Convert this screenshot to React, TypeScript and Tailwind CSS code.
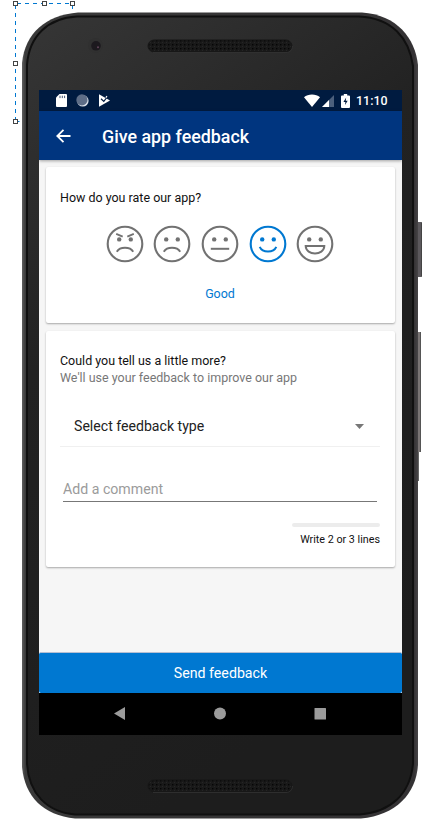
import type { ReactNode } from 'react';

type Mood = 'angry' | 'sad' | 'neutral' | 'good' | 'great';

function Face({ mood }: { mood: Mood }) {
  const selected = mood === 'good';
  return (
    <button aria-label={mood} className={selected ? 'text-[#0078d1]' : 'text-[#727272]'}>
      <svg className="block" width="38" height="38" viewBox="0 0 38 38" fill="none" stroke="currentColor" strokeWidth="2">
        <circle cx="19" cy="19" r="17.3" strokeWidth="2.1" />
        <circle cx="13.2" cy="14.4" r="2.2" fill="currentColor" stroke="none" />
        <circle cx="24.8" cy="14.4" r="2.2" fill="currentColor" stroke="none" />
        {mood === 'angry' && <path d="M10.2 8.8l6.5 2.8M27.8 8.8l-6.5 2.8" strokeWidth="1.8" />}
        {(mood === 'angry' || mood === 'sad') && <path d="M10.8 26.7C14 21.4 24 21.4 27.2 26.7" />}
        {mood === 'neutral' && <path d="M9.8 23.8h18.4" />}
        {mood === 'good' && <path d="M10.7 21.8C13.5 28.1 24.5 28.1 27.3 21.8" />}
        {mood === 'great' && <path d="M9.7 21H28.3C28 31 10 31 9.7 21Z" />}
      </svg>
    </button>
  );
}

function Speaker({ id }: { id: string }) {
  return (
    <svg className="block" width="146" height="14" viewBox="0 0 146 14">
      <defs>
        <pattern id={id} width="4" height="4" patternUnits="userSpaceOnUse">
          <rect width="4" height="4" fill="#191919" />
          <rect x="1" y="1" width="1.4" height="1.4" fill="#050505" />
          <rect x="3" y="3" width="1" height="1" fill="#252525" />
        </pattern>
      </defs>
      <rect x="1" y="1" width="144" height="12" rx="6" fill={`url(#${id})`} stroke="#171717" />
      <path d="M6 13.5H139C143 13.5 145.5 10.5 145.5 7" fill="none" stroke="#383838" strokeWidth=".7" />
    </svg>
  );
}

function Card({ className, children }: { className: string; children: ReactNode }) {
  return <section className={`rounded-[2px] bg-white pr-[15px] pl-[14px] shadow-[0_1px_2px_rgba(0,0,0,0.32)] ${className}`}>{children}</section>;
}

function StatusBar() {
  return (
    <div className="flex h-[21px] items-center bg-[#001b40] pr-[14.5px] pl-[17px] text-white">
      <svg width="11" height="13" viewBox="0 0 11 13">
        <path d="M3.5 0H10Q11 0 11 1V12Q11 13 10 13H1Q0 13 0 12V3.5Z" fill="currentColor" />
        <path d="M4 1.7v2.4M6.3 1.7v2.4M8.6 1.7v2.4" stroke="#425574" strokeWidth="1" />
      </svg>
      <svg className="ml-[9px]" width="13" height="13" viewBox="0 0 13 13">
        <circle cx="6.8" cy="6.8" r="5.8" fill="#dce1e8" />
        <circle cx="5.9" cy="5.9" r="5.6" fill="#5e6d86" />
      </svg>
      <svg className="ml-[10px]" width="12" height="13" viewBox="0 0 12 13">
        <path d="M0 .2L11 6.5L0 12.8Z" fill="currentColor" />
        <path d="M2 4.8L4.8 7.4L8.2 3" fill="none" stroke="#001b40" strokeWidth="1.2" />
        <path d="M6.8 3.6L8 2.2" stroke="#fff" strokeWidth="1.2" />
      </svg>
      <div className="ml-auto flex items-center">
        <svg width="16" height="13" viewBox="0 0 16 13">
          <path d="M0 3.3C4 -.4 12 -.4 16 3.3L8 13Z" fill="currentColor" />
        </svg>
        <svg className="ml-[2px]" width="13" height="13" viewBox="0 0 13 13">
          <path d="M12 1V13H0Z" fill="#4c607c" />
          <path d="M7 6V13H0Z" fill="currentColor" />
        </svg>
        <svg className="ml-[6px]" width="9" height="14" viewBox="0 0 9 14">
          <path d="M2.8 0H6.2V1.5H8Q9 1.5 9 2.5V13Q9 14 8 14H1Q0 14 0 13V2.5Q0 1.5 1 1.5H2.8Z" fill="currentColor" />
          <path d="M5.2 3.5L2.4 8h2L4 11L6.7 6.8H4.7Z" fill="#001b40" />
        </svg>
        <span className="ml-[6px] text-[12.4px] leading-[21px] font-medium">11:10</span>
      </div>
    </div>
  );
}

function Screen() {
  const moods: Mood[] = ['angry', 'sad', 'neutral', 'good', 'great'];
  return (
    <main className="flex h-[645px] flex-col overflow-hidden bg-[#f6f6f6]">
      <StatusBar />
      <header className="z-10 flex h-[49px] shrink-0 items-center bg-[#00357f] pl-[17px] text-white shadow-[0_1px_3px_rgba(0,0,0,0.35)]">
        <svg width="15" height="14" viewBox="0 0 15 14" fill="none" stroke="currentColor" strokeWidth="1.8">
          <path d="M14.5 7H1.5M7.5 .8L1.3 7L7.5 13.2" />
        </svg>
        <h1 className="ml-[31px] pt-[2px] text-[17.85px] leading-[24px] font-medium whitespace-nowrap">Give app feedback</h1>
      </header>
      <div className="flex grow flex-col gap-2 px-[7px] pt-[7px]">
        <Card className="h-[156px]">
          <h2 className="pt-[23px] text-[12.48px] leading-[16px] text-[#111]">How do you rate our app?</h2>
          <div className="mt-[19px] flex justify-center gap-[9.7px]">
            {moods.map((mood) => <Face key={mood} mood={mood} />)}
          </div>
          <p className="mt-[23px] text-center text-[12.48px] leading-[16px] text-[#0078d1]">Good</p>
        </Card>
        <Card className="h-[236px]">
          <h2 className="pt-[21px] text-[12.48px] leading-[17px] text-[#111]">Could you tell us a little more?</h2>
          <p className="text-[12.48px] leading-[17px] whitespace-nowrap text-[#777]">We'll use your feedback to improve our app</p>
          <div className="mt-[20px] flex h-[41px] items-center justify-between border-b border-[#f0f0f0] pr-[16px] pl-[14px]">
            <span className="text-[14.12px] leading-[20px] text-[#222]">Select feedback type</span>
            <svg width="9" height="5" viewBox="0 0 9 5"><path d="M0 0H9L4.5 5Z" fill="#777" /></svg>
          </div>
          <div className="mx-[3px] mt-[31px] h-[24px] border-b border-[#777] text-[14.15px] leading-[22px] text-[#9b9b9b]">
            <span>Add a comment</span>
          </div>
          <div className="mt-[21px] ml-auto h-[4px] w-[88px] rounded-[2px] bg-[#ececec]" />
          <p className="mt-[5px] text-right text-[10.75px] leading-[16px] text-[#111]">Write 2 or 3 lines</p>
        </Card>
      </div>
      <button className="h-[41px] shrink-0 rounded-[2px] border-t border-[#b5bfd3] bg-[#0078d1] text-[14.2px] leading-[40px] text-white">Send feedback</button>
      <nav className="h-[42px] shrink-0 bg-black">
        <svg width="363" height="42" viewBox="0 0 363 42" fill="#9b9b9b">
          <path d="M75 20.5L86 14V27Z" />
          <circle cx="181" cy="20.5" r="6" />
          <rect x="275.5" y="15" width="11.5" height="11.5" rx=".5" />
        </svg>
      </nav>
    </main>
  );
}

export default function App() {
  return (
    <div className="relative h-[837px] w-[429px] overflow-hidden bg-white font-[Roboto,sans-serif]">
      <svg className="absolute inset-0" width="429" height="130" viewBox="0 0 429 130" fill="none">
        <path d="M15.5 121V4M17 3.5H73M72.5 5V13" stroke="#0078d1" strokeDasharray="4 4" />
        <path d="M15.5 121.5H25" stroke="#0078d1" strokeDasharray="4 4" />
      </svg>
      <div className="absolute top-[222px] left-[414px] h-[55px] w-[8px] rounded-[1px] border-r border-[#444] bg-[#5c595d]" />
      <div className="absolute top-[332px] left-[414px] h-[120px] w-[7px] border-r border-[#555] bg-[#7a7575]" />
      <div className="absolute top-[452px] left-[414px] h-[29px] w-[5px] bg-[#666]" />
      <svg className="absolute inset-0" width="429" height="837" viewBox="0 0 429 837">
        <defs>
          <linearGradient id="rim"><stop stopColor="#606060" /><stop offset=".008" stopColor="#3a3a3a" /><stop offset=".99" stopColor="#343234" /><stop offset="1" stopColor="#464446" /></linearGradient>
          <linearGradient id="glass" x1="0" y1="0" x2=".35" y2="1"><stop stopColor="#363636" /><stop offset=".4" stopColor="#222" /><stop offset="1" stopColor="#1d1d1d" /></linearGradient>
        </defs>
        <path d="M78 12.5H362C397 15 415 38 418 65V765C416 794 396 815 361 818.5H75C43 815 25 797 22 767V63C25 33 46 15 78 12.5Z" fill="url(#rim)" />
        <path d="M77 16.5H359C392 18 409 38 413 66V764C410 794 391 812 360 814.5H75C46 812 29 793 27 764V65C29 36 48 18 77 16.5Z" fill="url(#glass)" stroke="#101010" strokeWidth="2" />
        <circle cx="95.5" cy="45.5" r="7.5" fill="#303030" />
        <circle cx="96" cy="45.8" r="4.8" fill="#1c191e" />
        <circle cx="98" cy="47.3" r="1" fill="#62455a" />
      </svg>
      <div className="relative flex h-full flex-col pt-[39px] pr-[27px] pl-[39px]">
        <div className="ml-[108px] h-[51px] pt-0"><Speaker id="upper-speaker" /></div>
        <Screen />
        <div className="mt-[44px] ml-[108px]"><Speaker id="lower-speaker" /></div>
      </div>
      <svg className="absolute inset-0" width="80" height="130" viewBox="0 0 80 130" fill="#fff" stroke="#444">
        <rect x="13.5" y="1.5" width="4" height="4" /><rect x="42.5" y="1.5" width="4" height="4" /><rect x="70.5" y="1.5" width="4" height="4" /><rect x="13.5" y="61.5" width="4" height="4" /><rect x="13.5" y="119.5" width="4" height="4" />
      </svg>
    </div>
  );
}
